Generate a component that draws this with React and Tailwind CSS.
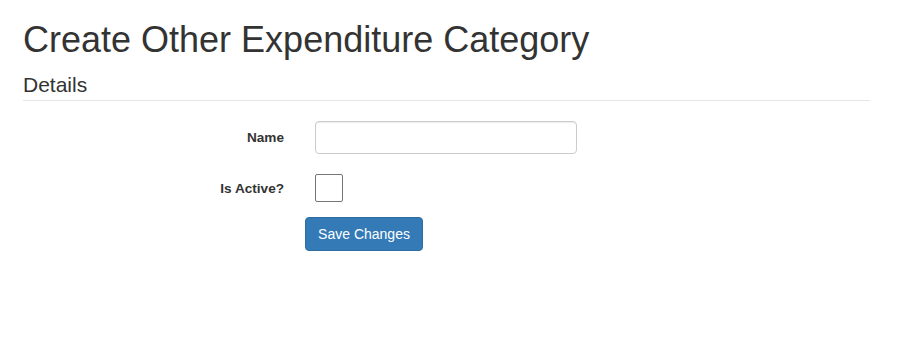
import React from 'react'

function Field({ label, children }) {
  return (
    <div className="flex items-center">
      <label className="w-[261px] pt-[2px] text-right text-[13.6px] font-bold text-[#333]">{label}</label>
      <div className="ml-[31px]">{children}</div>
    </div>
  )
}

export default function App() {
  return (
    <div className="min-h-[342px] bg-white font-['Liberation_Sans',Arial,sans-serif] text-[#333]">
      <div className="ml-[23px] w-[847px]">
        {/* Header */}
        <h1 className="pt-[20px] text-[36px] leading-[40px] font-normal">Create Other Expenditure Category</h1>
        <div className="mt-[10px] h-[31px] border-b border-[#e5e5e5] text-[21px] leading-[30px]">Details</div>

        {/* Form */}
        <form className="mt-[20px]">
          <Field label="Name">
            <input
              type="text"
              className="block h-[33px] w-[262px] rounded-[4px] border border-[#ccc] px-3 text-sm shadow-[inset_0_1px_1px_rgba(0,0,0,0.075)] outline-none"
            />
          </Field>
          <div className="mt-[20px]">
            <Field label="Is Active?">
              <div className="h-[28px] w-[28px] rounded-[2px] border border-[#767676] bg-white" />
            </Field>
          </div>
          <div className="mt-[15px] pl-[282px]">
            <button
              type="button"
              className="h-[34px] w-[118px] rounded-[4px] border border-[#2e6da4] bg-[#337ab7] text-[14px] text-white"
            >
              Save Changes
            </button>
          </div>
        </form>
      </div>
    </div>
  )
}
